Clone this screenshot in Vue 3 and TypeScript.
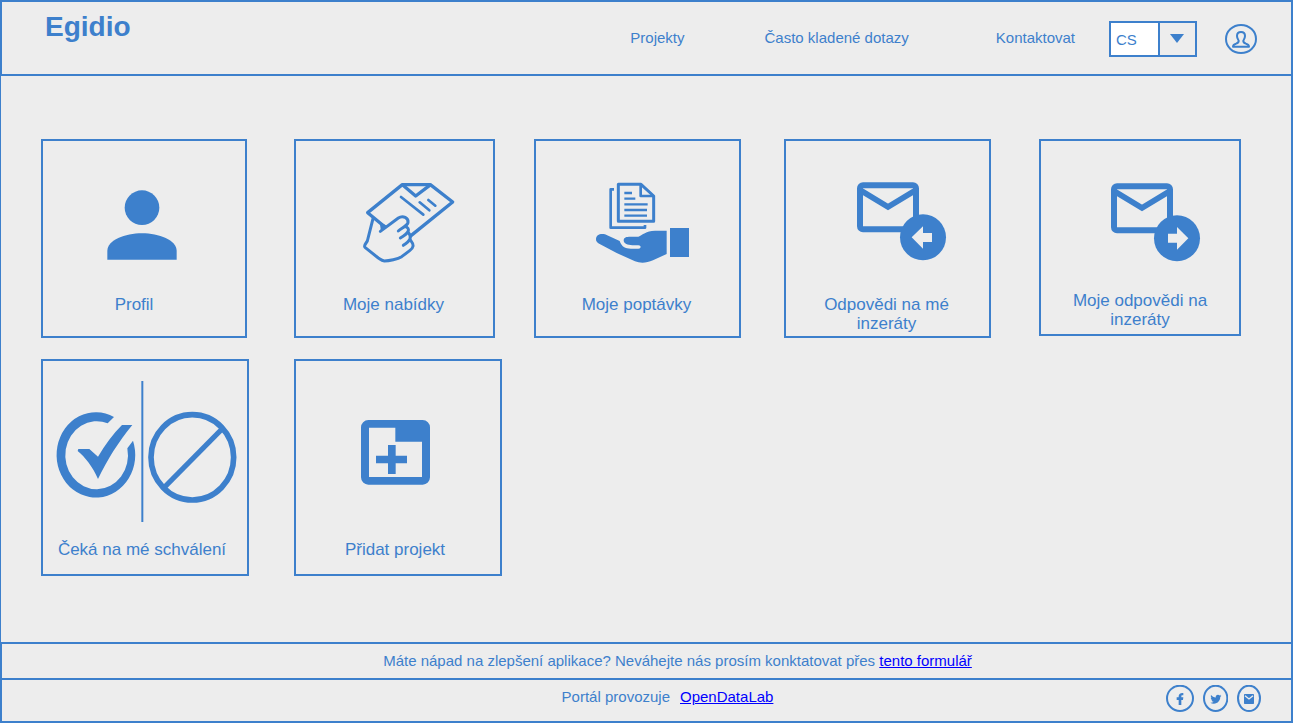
<script setup lang="ts">
import { ref } from 'vue'

type IconName = 'person' | 'handPaper' | 'handDocs' | 'mailIn' | 'mailOut' | 'approval' | 'addTab'

interface Card {
  label: string
  icon: IconName
  viewBox: string
  kind: string
}

const language = ref('CS')

const navItems: string[] = ['Projekty', 'Často kladené dotazy', 'Kontaktovat']

const cards: Card[] = [
  { label: 'Profil', icon: 'person', viewBox: '39 33 606 462', kind: 'card--profile' },
  { label: 'Moje nabídky', icon: 'handPaper', viewBox: '33 33 591 462', kind: 'card--narrow' },
  { label: 'Moje poptávky', icon: 'handDocs', viewBox: '33 33 609 462', kind: '' },
  { label: 'Odpovědi na mé inzeráty', icon: 'mailIn', viewBox: '33 33 609 462', kind: '' },
  { label: 'Moje odpovědi na inzeráty', icon: 'mailOut', viewBox: '33 33 594 450', kind: 'card--short' },
  { label: 'Čeká na mé schválení', icon: 'approval', viewBox: '38 33 612 537', kind: 'card--tall' },
  { label: 'Přidat projekt', icon: 'addTab', viewBox: '33 33 612 537', kind: 'card--tall' },
]
</script>

<template>
  <div class="page">
    <header class="header">
      <h1 class="logo">Egidio</h1>
      <nav class="nav">
        <a v-for="item in navItems" :key="item" class="nav-link" href="#">{{ item }}</a>
      </nav>
      <div class="tools">
        <div class="language">
          <select v-model="language" class="language-select" aria-label="Jazyk">
            <option>CS</option>
            <option>EN</option>
          </select>
          <svg class="language-arrow" viewBox="0 0 14 9" aria-hidden="true"><path d="M0 0H14L7 9Z" /></svg>
        </div>
        <a class="account" href="#" aria-label="Můj účet">
          <svg class="account-icon" viewBox="735 72 96 90">
            <ellipse cx="783" cy="117" rx="45" ry="42" class="line" stroke-width="6" />
            <path
              class="line"
              stroke-width="6"
              stroke-linejoin="round"
              d="M783 96C774 96 771 102 771 108C771 114 774 118 776 122C777 128 774 129 768 131C761 133 759 135 759 140H807C807 135 805 133 798 131C792 129 789 128 790 122C792 118 795 114 795 108C795 102 792 96 783 96Z"
            />
          </svg>
        </a>
      </div>
    </header>

    <main class="main">
      <a v-for="card in cards" :key="card.label" class="card" :class="card.kind" href="#">
        <svg class="art" :viewBox="card.viewBox" preserveAspectRatio="xMinYMin meet" aria-hidden="true">
          <g v-if="card.icon === 'person'" class="solid">
            <circle cx="336" cy="233" r="52" />
            <path d="M232 389V363C232 330 285 310 336 310S440 330 440 363V389Z" />
          </g>

          <g v-else-if="card.icon === 'handPaper'" class="line" stroke-width="9" stroke-linecap="round" stroke-linejoin="round">
            <path stroke-width="10" d="M300 291L248 248L352 164H436L503 216L378 317" />
            <path stroke-width="10" d="M354 166L392 198L434 166" />
            <path stroke-width="8" d="M348 201L415 254M404 217L433 241M430 210L451 227" />
            <path class="solid" stroke="none" d="M284 276L306 287L288 305Z" />
            <path d="M286 304L340 264C354 255 371 264 369 278C367 288 350 294 340 303" />
            <path d="M361 290C377 296 373 308 346 324" />
            <path d="M371 309C381 321 377 331 355 346" />
            <path d="M377 331C388 345 386 353 374 362L350 380C338 388 312 393 298 393C290 392 286 388 280 384L240 352C235 346 243 341 247 333L264 266" />
          </g>

          <g v-else-if="card.icon === 'handDocs'">
            <g class="line" stroke-linejoin="round">
              <path stroke-width="9" d="M280 163H348L386 198V274H280Z" />
              <path stroke-width="8" d="M347 163V198H386" />
              <path stroke-width="8" d="M267 178H257V293H360V285" />
              <path stroke-width="7" d="M298 189H321M298 206H331M298 223H368M298 240H366M298 257H366" />
            </g>
            <path
              class="solid"
              d="M213 328C213 314 226 310 240 313L284 333C290 350 300 356 318 356H340C349 356 349 346 340 346H322C308 345 296 342 296 331C296 322 304 320 316 320H340C354 314 362 303 390 302H425V372L384 391C364 400 345 400 330 394L275 369L224 342C216 338 213 334 213 328Z"
            />
            <path class="solid" d="M435 294H492V381H435Z" />
          </g>

          <g v-else-if="card.icon === 'mailIn' || card.icon === 'mailOut'" :transform="card.icon === 'mailOut' ? 'translate(-3 3)' : undefined">
            <rect class="line" x="255" y="166" width="168" height="132" rx="9" stroke-width="18" />
            <path class="line" stroke-width="17" d="M255 180L339 231L423 180" />
            <circle class="solid" cx="444" cy="322" r="69" />
            <path v-if="card.icon === 'mailIn'" class="cutout" d="M410 322L444 289V309H471V336H444V356Z" />
            <path v-else class="cutout" d="M478 322L444 288V308H417V335H444V356Z" />
          </g>

          <g v-else-if="card.icon === 'approval'">
            <path class="solid" d="M251 201A118 128 0 1 0 308 272L291 295A94 102 0 1 1 232 220Z" />
            <path class="solid" d="M144 297H177L203 320C224 285 248 252 275 225H306C265 275 230 330 203 387C187 350 165 322 142 303Z" />
            <path class="solid" d="M333 93H339V516H333Z" />
            <ellipse class="line" cx="486" cy="322" rx="124" ry="128" stroke-width="17" />
            <path class="line" stroke-width="16" d="M403 411L575 237" />
          </g>

          <g v-else class="solid">
            <path
              fill-rule="evenodd"
              d="M250 210H413A22 22 0 0 1 435 232V382A22 22 0 0 1 413 404H250A22 22 0 0 1 228 382V232A22 22 0 0 1 250 210ZM252 233V381H411V275H331V233Z"
            />
            <path d="M309 285H332V317H366V340H332V372H309V340H273V317H309Z" />
          </g>
        </svg>
        <span class="card-label">{{ card.label }}</span>
      </a>
    </main>

    <footer class="footer">
      <p class="feedback">
        Máte nápad na zlepšení aplikace? Neváhejte nás prosím konktatovat přes
        <a class="text-link" href="#">tento formulář</a>
      </p>
      <div class="operator">
        <p class="operator-text">
          <span>Portál provozuje</span>
          <a class="text-link" href="#">OpenDataLab</a>
        </p>
        <div class="social">
          <a class="social-link" href="#" aria-label="Facebook">
            <svg width="28" height="27" viewBox="78 150 84 81">
              <ellipse class="line" cx="120" cy="190" rx="39" ry="38" stroke-width="6" />
              <path class="solid" d="M116 210V195H110V187H116V184C116 177 121 173 130 174V181H127C124 181 124 183 124 185V187H130L129 195H124V210Z" />
            </svg>
          </a>
          <a class="social-link" href="#" aria-label="Twitter">
            <svg width="25" height="27" viewBox="189 150 75 81">
              <ellipse class="line" cx="227" cy="190" rx="35" ry="38" stroke-width="6" />
              <path
                class="solid"
                transform="translate(211 176) scale(1.38)"
                d="M23.953 4.57a10 10 0 01-2.825.775 4.958 4.958 0 002.163-2.723c-.951.555-2.005.959-3.127 1.184a4.92 4.92 0 00-8.384 4.482C7.69 8.095 4.067 6.13 1.64 3.162a4.822 4.822 0 00-.666 2.475c0 1.71.87 3.213 2.188 4.096a4.904 4.904 0 01-2.228-.616v.06a4.923 4.923 0 003.946 4.827 4.996 4.996 0 01-2.212.085 4.936 4.936 0 004.604 3.417 9.867 9.867 0 01-6.102 2.105c-.39 0-.779-.023-1.17-.067a13.995 13.995 0 007.557 2.209c9.053 0 13.998-7.496 13.998-13.985 0-.21 0-.42-.015-.63A9.935 9.935 0 0024 4.59z"
              />
            </svg>
          </a>
          <a class="social-link" href="#" aria-label="E-mail">
            <svg width="24" height="27" viewBox="291 150 72 81">
              <ellipse class="line" cx="327" cy="190" rx="33" ry="38" stroke-width="6" />
              <rect class="solid" x="312" y="177" width="30" height="30" rx="2" />
              <path class="line line--cutout" stroke-width="4" d="M315 182L327 192L339 182" />
            </svg>
          </a>
        </div>
      </div>
    </footer>
  </div>
</template>

<style>
body {
  margin: 0;
  background: #ededed;
}
</style>

<style scoped>
.page {
  --blue: #3d80cc;
  --ground: #ededed;
  box-sizing: border-box;
  min-height: 100vh;
  display: flex;
  flex-direction: column;
  background: var(--ground);
  color: var(--blue);
  font-family: 'Liberation Sans', Arial, sans-serif;
  font-size: 15px;
  line-height: 17px;
}

.line {
  fill: none;
  stroke: var(--blue);
}

.line--cutout {
  stroke: var(--ground);
}

.solid {
  fill: var(--blue);
}

.cutout {
  fill: var(--ground);
}

.header {
  box-sizing: border-box;
  min-height: 76px;
  display: flex;
  align-items: flex-start;
  padding: 0 34px 0 43px;
  border: 2px solid var(--blue);
}

.logo {
  margin: 9px auto 0 0;
  font-size: 28px;
  line-height: 32px;
  font-weight: bold;
}

.nav {
  display: flex;
  gap: 80px;
  padding: 27px 34px 0 0;
}

.nav-link {
  color: inherit;
  text-decoration: none;
}

.nav-link:last-child {
  padding-left: 7px;
}

.tools {
  display: flex;
  align-items: center;
  gap: 28px;
  padding-top: 19px;
}

.language {
  position: relative;
  display: flex;
}

.language-select {
  appearance: none;
  box-sizing: border-box;
  width: 88px;
  height: 36px;
  margin: 0;
  padding: 0 40px 0 5px;
  border: 2px solid var(--blue);
  border-radius: 0;
  background: linear-gradient(to right, #fff 47px, var(--blue) 47px, var(--blue) 49px, var(--ground) 49px);
  color: inherit;
  font: inherit;
}

.language-arrow {
  position: absolute;
  top: 13px;
  right: 13px;
  width: 14px;
  height: 9px;
  fill: var(--blue);
  pointer-events: none;
}

.account,
.social-link {
  display: flex;
}

.account-icon {
  width: 32px;
  height: 30px;
}

.main {
  flex: 1;
  display: grid;
  grid-template-columns: 253fr 240fr 250fr 255fr 202fr;
  align-content: start;
  row-gap: 21px;
  padding: 63px 50px 40px 40px;
  border-left: 1px solid var(--blue);
  border-right: 2px solid var(--blue);
}

.card {
  box-sizing: border-box;
  width: 207px;
  padding-bottom: 3px;
  display: flex;
  flex-direction: column;
  border: 2px solid var(--blue);
  color: inherit;
  text-decoration: none;
}

.card--profile {
  width: 206px;
}

.card--narrow {
  width: 201px;
}

.card--short {
  align-self: start;
  width: 202px;
  padding-bottom: 5px;
}

.card--tall {
  width: 208px;
  padding-bottom: 15px;
}

.art {
  display: block;
  width: 100%;
  height: 154px;
}

.card--short .art {
  height: 150px;
}

.card--tall .art {
  height: 179px;
}

.card-label {
  padding: 0 24px 0 22px;
  font-size: 17px;
  line-height: 19px;
  text-align: center;
}

.card--profile .card-label {
  padding-right: 42px;
}

.card--short .card-label {
  padding-right: 22px;
}

.card--tall .card-label {
  padding: 0 18px 0 12px;
}

.text-link {
  color: #0000ff;
}

.feedback {
  margin: 0;
  padding: 8px 0 9px 62px;
  border: 2px solid var(--blue);
  text-align: center;
}

.operator {
  display: grid;
  grid-template-columns: 1fr auto 1fr;
  align-items: start;
  padding: 5px 30px 9px;
  border: 2px solid var(--blue);
  border-top: 0;
}

.operator-text {
  grid-column: 2;
  display: flex;
  gap: 10px;
  margin: 0;
  padding: 3px 0 0 42px;
}

.social {
  display: flex;
  justify-content: flex-end;
  gap: 9px;
}
</style>
